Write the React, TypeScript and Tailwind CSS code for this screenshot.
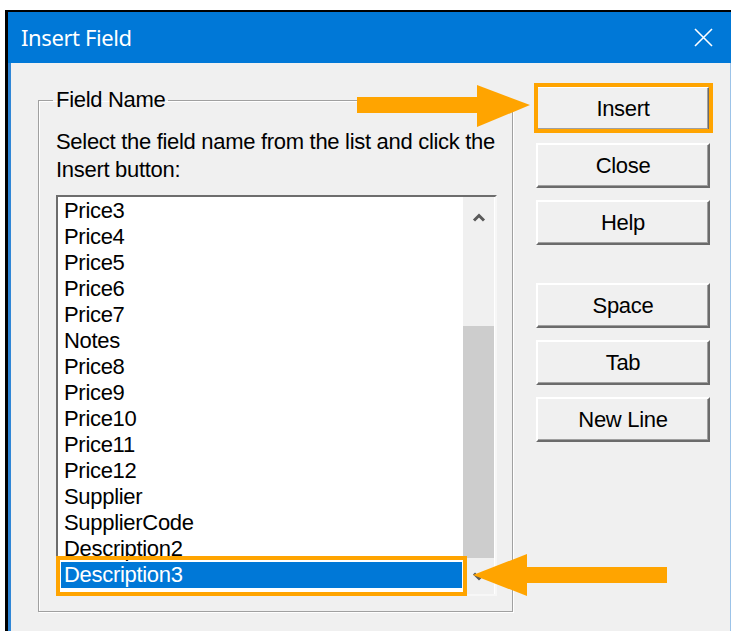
const FIELDS = [
  "Price3",
  "Price4",
  "Price5",
  "Price6",
  "Price7",
  "Notes",
  "Price8",
  "Price9",
  "Price10",
  "Price11",
  "Price12",
  "Supplier",
  "SupplierCode",
  "Description2",
  "Description3",
];

const SELECTED = "Description3";

function Chevron({ down = false }: { down?: boolean }) {
  return (
    <svg width="14" height="9" viewBox="0 0 14 9" className={down ? "rotate-180" : ""}>
      <path d="M2 7.5 L7 2.5 L12 7.5" fill="none" stroke="#5a5a5a" strokeWidth="3" />
    </svg>
  );
}

function WinButton({ label }: { label: string }) {
  return (
    <button className="h-[45px] w-[174px] border-t-2 border-l-2 border-t-white border-l-white border-r-2 border-b-2 border-r-[#6b6b6b] border-b-[#6b6b6b] bg-[#f0f0f0] shadow-[inset_-1px_-1px_0_#a0a0a0] text-[22px] leading-none tracking-[-0.3px] text-black">
      {label}
    </button>
  );
}

function FieldList() {
  return (
    <div className="ml-[17px] mt-[11px] flex h-[401px] w-[441px] border-t-2 border-l-2 border-t-[#6d6d6d] border-l-[#6d6d6d] border-r-2 border-b-2 border-r-[#f7f7f7] border-b-[#f7f7f7] bg-white">
      <ul className="flex-1 pt-[1px]">
        {FIELDS.map((name) => (
          <li
            key={name}
            className={
              name === SELECTED
                ? "ml-[3px] mr-[1px] h-[26px] bg-[#0078d7] pl-[3px] leading-[26px] text-white"
                : "h-[26px] pl-[6px] leading-[26px]"
            }
          >
            {name}
          </li>
        ))}
      </ul>
      <div className="mr-[1px] flex w-[31px] flex-col bg-[#f0f0f0]">
        <div className="flex h-[40px] items-center justify-center">
          <Chevron />
        </div>
        <div className="h-[89px]" />
        <div className="h-[232px] bg-[#cdcdcd]" />
        <div className="flex flex-1 items-center justify-center">
          <Chevron down />
        </div>
      </div>
    </div>
  );
}

// orange call-outs drawn on top of the dialog
function Callouts() {
  return (
    <svg className="pointer-events-none absolute left-0 top-0" width="733" height="631">
      <rect x="536" y="85" width="175" height="46" fill="none" stroke="#ffa400" strokeWidth="4" />
      <rect x="58" y="558" width="407" height="36" fill="none" stroke="#ffa400" strokeWidth="4" />
      <rect x="357" y="97" width="121" height="16" fill="#ffa400" />
      <polygon points="477,85 530,105 477,127" fill="#ffa400" />
      <rect x="526" y="567" width="141" height="16" fill="#ffa400" />
      <polygon points="527,554 473,575 527,596" fill="#ffa400" />
    </svg>
  );
}

export default function App() {
  return (
    <div className="relative h-[631px] w-[733px] overflow-hidden bg-white pt-[10px] pl-[5px] pr-[2px] font-['Liberation_Sans',Arial,sans-serif] text-[22px] tracking-[-0.3px] text-black">
      <div className="flex h-full flex-col border-t-2 border-l-[3px] border-black">
        <div className="flex h-[51px] items-center justify-between bg-[#0078d7] pl-[13px] pr-[18px]">
          <span className="font-['Noto_Sans',sans-serif] text-[22px] tracking-[-0.4px] text-white">Insert Field</span>
          <svg width="19" height="19" viewBox="0 0 19 19">
            <path d="M1 1 L18 18 M18 1 L1 18" stroke="#fff" strokeWidth="1.6" />
          </svg>
        </div>
        <div className="flex flex-1 border-l-[3px] border-r border-l-[#2f86d6] border-r-[#9cc3e8] bg-[#f0f0f0]">
          <fieldset className="ml-[27px] mt-[27px] h-[522px] w-[475px] border border-[#a0a0a0] shadow-[inset_1px_1px_0_#fff,1px_1px_0_#fff]">
            <legend className="ml-[14px] px-[3px] leading-[20px]">Field Name</legend>
            <p className="mt-[18px] pl-[17px] leading-[28px]">
              Select the field name from the list and click the
              <br />
              Insert button:
            </p>
            <FieldList />
          </fieldset>
          <div className="ml-[23px] mt-[23px] flex flex-col">
            <div className="flex flex-col gap-[12px]">
              <WinButton label="Insert" />
              <WinButton label="Close" />
              <WinButton label="Help" />
            </div>
            <div className="mt-[38px] flex flex-col gap-[12px]">
              <WinButton label="Space" />
              <WinButton label="Tab" />
              <WinButton label="New Line" />
            </div>
          </div>
        </div>
      </div>
      <Callouts />
    </div>
  );
}
